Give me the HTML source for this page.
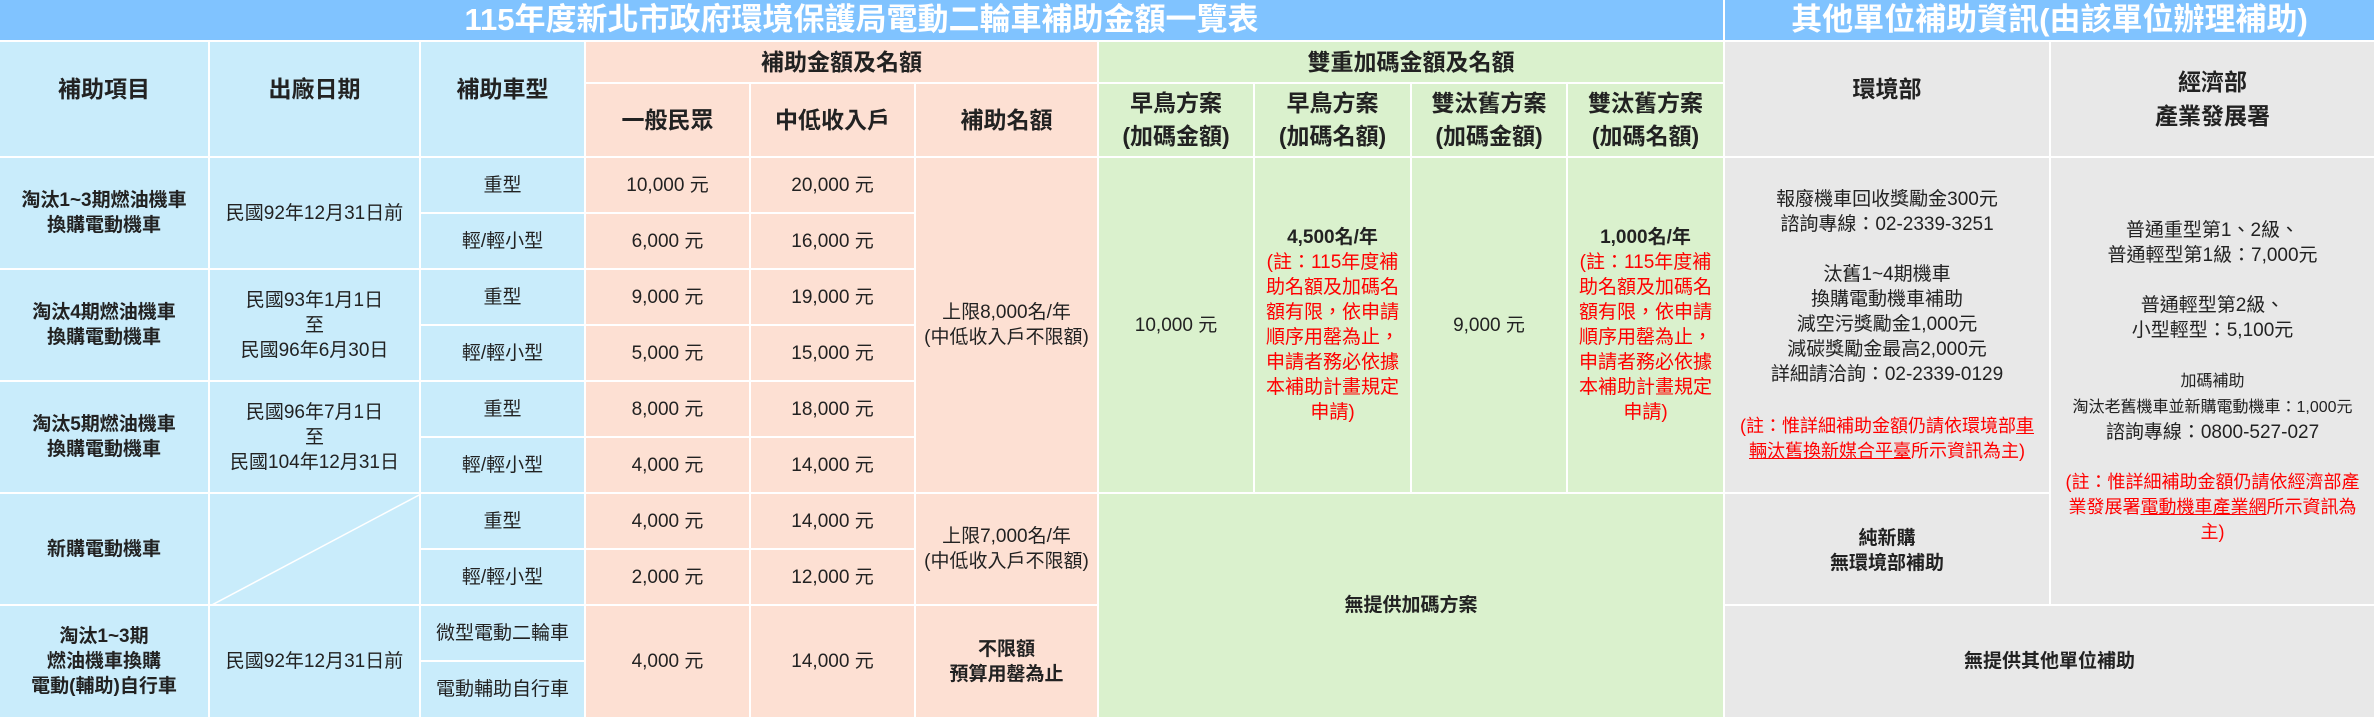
<!DOCTYPE html>
<html><head><meta charset="utf-8"><style>
*{margin:0;padding:0;box-sizing:border-box}
body{width:2376px;height:719px;overflow:hidden;background:#fff;font-family:"Liberation Sans","Noto Sans CJK TC",sans-serif;color:#222}
.c{position:absolute;display:flex;align-items:center;justify-content:center;text-align:center;border-right:2px solid #fff;border-bottom:2px solid #fff;font-size:19px;line-height:25px;white-space:nowrap}
.t{background:#80c3ff;color:#fff;font-size:31px;font-weight:bold;line-height:40px}
.b{background:#c9ecfb}.p{background:#fde0d3}.g{background:#daf1cd}.y{background:#e8e8e8}
.h{font-size:23px;font-weight:bold;line-height:40px}
.k{font-weight:bold}
.r{color:#f00}
.n{font-size:18px}
u{text-decoration:underline}
</style></head><body>
<div class="c t" style="left:0;top:0;width:1725px;height:42px">115年度新北市政府環境保護局電動二輪車補助金額一覽表</div>
<div class="c t" style="left:1725px;top:0;width:651px;height:42px">其他單位補助資訊(由該單位辦理補助)</div>

<div class="c b h" style="left:0;top:42px;width:210px;height:116px;padding-bottom:20px">補助項目</div>
<div class="c b h" style="left:210px;top:42px;width:211px;height:116px;padding-bottom:20px">出廠日期</div>
<div class="c b h" style="left:421px;top:42px;width:165px;height:116px;padding-bottom:20px">補助車型</div>
<div class="c p k" style="left:586px;top:42px;width:513px;height:42px;font-size:23px">補助金額及名額</div>
<div class="c p h" style="left:586px;top:84px;width:165px;height:74px">一般民眾</div>
<div class="c p h" style="left:751px;top:84px;width:165px;height:74px">中低收入戶</div>
<div class="c p h" style="left:916px;top:84px;width:183px;height:74px">補助名額</div>
<div class="c g k" style="left:1099px;top:42px;width:626px;height:42px;font-size:23px">雙重加碼金額及名額</div>
<div class="c g h" style="left:1099px;top:84px;width:156px;height:74px;line-height:33px">早鳥方案<br>(加碼金額)</div>
<div class="c g h" style="left:1255px;top:84px;width:157px;height:74px;line-height:33px">早鳥方案<br>(加碼名額)</div>
<div class="c g h" style="left:1412px;top:84px;width:156px;height:74px;line-height:33px">雙汰舊方案<br>(加碼金額)</div>
<div class="c g h" style="left:1568px;top:84px;width:157px;height:74px;line-height:33px">雙汰舊方案<br>(加碼名額)</div>
<div class="c y h" style="left:1725px;top:42px;width:326px;height:116px;padding-bottom:20px">環境部</div>
<div class="c y h" style="left:2051px;top:42px;width:325px;height:116px;line-height:34px">經濟部<br>產業發展署</div>

<div class="c b k" style="left:0;top:158px;width:210px;height:112px">淘汰1~3期燃油機車<br>換購電動機車</div>
<div class="c b k" style="left:0;top:270px;width:210px;height:112px">淘汰4期燃油機車<br>換購電動機車</div>
<div class="c b k" style="left:0;top:382px;width:210px;height:112px">淘汰5期燃油機車<br>換購電動機車</div>
<div class="c b k" style="left:0;top:494px;width:210px;height:112px">新購電動機車</div>
<div class="c b k" style="left:0;top:606px;width:210px;height:113px">淘汰1~3期<br>燃油機車換購<br>電動(輔助)自行車</div>

<div class="c b" style="left:210px;top:158px;width:211px;height:112px">民國92年12月31日前</div>
<div class="c b" style="left:210px;top:270px;width:211px;height:112px">民國93年1月1日<br>至<br>民國96年6月30日</div>
<div class="c b" style="left:210px;top:382px;width:211px;height:112px">民國96年7月1日<br>至<br>民國104年12月31日</div>
<div class="c b" style="left:210px;top:494px;width:211px;height:112px"><svg style="position:absolute;left:0;top:0" width="211" height="112"><line x1="0" y1="112" x2="211" y2="0" stroke="#fff" stroke-width="1.5"/></svg></div>
<div class="c b" style="left:210px;top:606px;width:211px;height:113px">民國92年12月31日前</div>

<div class="c b" style="left:421px;top:158px;width:165px;height:56px">重型</div>
<div class="c b" style="left:421px;top:214px;width:165px;height:56px">輕/輕小型</div>
<div class="c b" style="left:421px;top:270px;width:165px;height:56px">重型</div>
<div class="c b" style="left:421px;top:326px;width:165px;height:56px">輕/輕小型</div>
<div class="c b" style="left:421px;top:382px;width:165px;height:56px">重型</div>
<div class="c b" style="left:421px;top:438px;width:165px;height:56px">輕/輕小型</div>
<div class="c b" style="left:421px;top:494px;width:165px;height:56px">重型</div>
<div class="c b" style="left:421px;top:550px;width:165px;height:56px">輕/輕小型</div>
<div class="c b" style="left:421px;top:606px;width:165px;height:56px">微型電動二輪車</div>
<div class="c b" style="left:421px;top:662px;width:165px;height:57px">電動輔助自行車</div>

<div class="c p" style="left:586px;top:158px;width:165px;height:56px">10,000 元</div>
<div class="c p" style="left:586px;top:214px;width:165px;height:56px">6,000 元</div>
<div class="c p" style="left:586px;top:270px;width:165px;height:56px">9,000 元</div>
<div class="c p" style="left:586px;top:326px;width:165px;height:56px">5,000 元</div>
<div class="c p" style="left:586px;top:382px;width:165px;height:56px">8,000 元</div>
<div class="c p" style="left:586px;top:438px;width:165px;height:56px">4,000 元</div>
<div class="c p" style="left:586px;top:494px;width:165px;height:56px">4,000 元</div>
<div class="c p" style="left:586px;top:550px;width:165px;height:56px">2,000 元</div>
<div class="c p" style="left:586px;top:606px;width:165px;height:113px">4,000 元</div>
<div class="c p" style="left:751px;top:158px;width:165px;height:56px">20,000 元</div>
<div class="c p" style="left:751px;top:214px;width:165px;height:56px">16,000 元</div>
<div class="c p" style="left:751px;top:270px;width:165px;height:56px">19,000 元</div>
<div class="c p" style="left:751px;top:326px;width:165px;height:56px">15,000 元</div>
<div class="c p" style="left:751px;top:382px;width:165px;height:56px">18,000 元</div>
<div class="c p" style="left:751px;top:438px;width:165px;height:56px">14,000 元</div>
<div class="c p" style="left:751px;top:494px;width:165px;height:56px">14,000 元</div>
<div class="c p" style="left:751px;top:550px;width:165px;height:56px">12,000 元</div>
<div class="c p" style="left:751px;top:606px;width:165px;height:113px">14,000 元</div>

<div class="c p" style="left:916px;top:158px;width:183px;height:336px">上限8,000名/年<br>(中低收入戶不限額)</div>
<div class="c p" style="left:916px;top:494px;width:183px;height:112px">上限7,000名/年<br>(中低收入戶不限額)</div>
<div class="c p k" style="left:916px;top:606px;width:183px;height:113px">不限額<br>預算用罄為止</div>

<div class="c g" style="left:1099px;top:158px;width:156px;height:336px">10,000 元</div>
<div class="c g" style="left:1255px;top:158px;width:157px;height:336px"><div><span class="k">4,500名/年</span><br><span class="r">(註：115年度補<br>助名額及加碼名<br>額有限，依申請<br>順序用罄為止，<br>申請者務必依據<br>本補助計畫規定<br>申請)</span></div></div>
<div class="c g" style="left:1412px;top:158px;width:156px;height:336px">9,000 元</div>
<div class="c g" style="left:1568px;top:158px;width:157px;height:336px"><div><span class="k">1,000名/年</span><br><span class="r">(註：115年度補<br>助名額及加碼名<br>額有限，依申請<br>順序用罄為止，<br>申請者務必依據<br>本補助計畫規定<br>申請)</span></div></div>
<div class="c g k" style="left:1099px;top:494px;width:626px;height:225px">無提供加碼方案</div>

<div class="c y" style="left:1725px;top:158px;width:326px;height:336px"><div>報廢機車回收獎勵金300元<br>諮詢專線：02-2339-3251<br><br>汰舊1~4期機車<br>換購電動機車補助<br>減空污獎勵金1,000元<br>減碳獎勵金最高2,000元<br>詳細請洽詢：02-2339-0129<br><div style="height:27px"></div><span class="r n">(註：惟詳細補助金額仍請依環境部<u>車<br>輛汰舊換新媒合平臺</u>所示資訊為主)</span></div></div>
<div class="c y k" style="left:1725px;top:494px;width:326px;height:112px;padding-top:4px">純新購<br>無環境部補助</div>
<div class="c y" style="left:2051px;top:158px;width:325px;height:448px"><div>普通重型第1、2級、<br>普通輕型第1級：7,000元<br><br>普通輕型第2級、<br>小型輕型：5,100元<br><br><span style="font-size:16px">加碼補助<br>淘汰老舊機車並新購電動機車：1,000元</span><br>諮詢專線：0800-527-027<br><br><span class="r n">(註：惟詳細補助金額仍請依經濟部產<br>業發展署<u>電動機車產業網</u>所示資訊為<br>主)</span></div></div>
<div class="c y k" style="left:1725px;top:606px;width:651px;height:113px">無提供其他單位補助</div>
</body></html>
